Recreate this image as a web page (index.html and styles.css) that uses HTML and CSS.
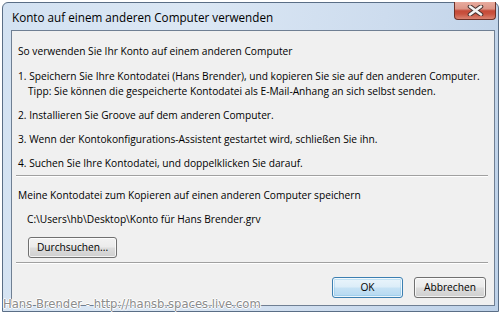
FILE: index.html
```html
<!DOCTYPE html>
<html lang="de">
<head>
<meta charset="utf-8">
<title>Konto auf einem anderen Computer verwenden</title>
<link rel="stylesheet" href="styles.css">
</head>
<body>
<div class="window">
  <div class="titlebar">
    <span class="title">Konto auf einem anderen Computer verwenden</span>
    <div class="close">
      <svg width="17" height="11" viewBox="0 0 17 11">
        <path d="M3 1.5 L14 9.5 M14 1.5 L3 9.5" stroke="#4a3431" stroke-width="4.6" stroke-linecap="round" fill="none"/>
        <path d="M3 1.5 L14 9.5 M14 1.5 L3 9.5" stroke="#f4f4f4" stroke-width="2.6" stroke-linecap="round" fill="none"/>
      </svg>
    </div>
  </div>
  <div class="client">
    <p class="line">So verwenden Sie Ihr Konto auf einem anderen Computer</p>
    <div class="step first">
      <p class="line">1. Speichern Sie Ihre Kontodatei (Hans Brender), und kopieren Sie sie auf den anderen Computer.</p>
      <p class="line tip">Tipp: Sie können die gespeicherte Kontodatei als E-Mail-Anhang an sich selbst senden.</p>
    </div>
    <p class="line step">2. Installieren Sie Groove auf dem anderen Computer.</p>
    <p class="line step">3. Wenn der Kontokonfigurations-Assistent gestartet wird, schließen Sie ihn.</p>
    <p class="line step">4. Suchen Sie Ihre Kontodatei, und doppelklicken Sie darauf.</p>
    <div class="sep sep-top"></div>
    <p class="line save">Meine Kontodatei zum Kopieren auf einen anderen Computer speichern</p>
    <p class="line path">C:\Users\hb\Desktop\Konto für Hans Brender.grv</p>
    <div class="browse-row"><button class="btn browse">Durchsuchen...</button></div>
    <div class="sep sep-bottom"></div>
    <div class="actions">
      <button class="btn ok">OK</button>
      <button class="btn cancel">Abbrechen</button>
    </div>
  </div>
</div>
<div class="watermark">Hans Brender - http://hansb.spaces.live.com</div>
</body>
</html>
```

FILE: styles.css
```css
html, body {
  margin: 0;
  padding: 0;
  background: #ffffff;
}

body {
  font-family: "Open Sans", "Noto Sans", sans-serif;
  font-size: 10.2px;
  color: #000;
  position: relative;
  width: 504px;
  height: 314px;
  overflow: hidden;
}

.window {
  margin: 2px 0 0 2px;
  width: 497px;
  height: 310px;
  box-sizing: border-box;
  border: 1px solid #5a6e86;
  border-radius: 6px 6px 0 0;
  background: linear-gradient(100deg, #d3e2f2 0%, #dbe7f4 35%, #cddcee 70%, #bdd1e8 100%);
  display: flex;
  flex-direction: column;
}

.titlebar {
  height: 27px;
  display: flex;
  justify-content: space-between;
  align-items: flex-start;
}

.title {
  padding-left: 9px;
  margin-top: 7px;
  line-height: 15px;
  font-size: 11.7px;
}

.close {
  width: 42px;
  height: 18px;
  margin-right: 2px;
  margin-top: -1px;
  box-sizing: border-box;
  border: 1px solid #6e3128;
  border-top: none;
  border-radius: 0 0 4px 4px;
  background: linear-gradient(#e8ab9e 0%, #dc9587 40%, #c54a38 52%, #c9523f 70%, #da8472 100%);
  display: flex;
  align-items: center;
  justify-content: center;
}

.close svg {
  display: block;
}

.client {
  margin-left: 8px;
  width: 484px;
  height: 276px;
  box-sizing: border-box;
  border: 1px solid #6f7f93;
  background: #f0f0f0;
  padding: 13px 7px 0 6px;
  display: flex;
  flex-direction: column;
}

.line {
  margin: 0;
  line-height: 15px;
  white-space: nowrap;
}

.step {
  margin-top: 9px;
}

.step.first {
  margin-top: 10px;
}

.tip {
  padding-left: 10px;
}

.sep {
  height: 1px;
  background: #a0a0a0;
  border-bottom: 1px solid #ffffff;
  margin-left: -2px;
  margin-right: -1px;
}

.sep-top {
  margin-top: 4px;
}

.save {
  margin-top: 11px;
}

.path {
  margin-top: 9px;
  padding-left: 9px;
}

.browse-row {
  margin-top: 10px;
  display: flex;
}

.btn {
  font-family: inherit;
  font-size: 10.2px;
  color: #000;
  height: 21px;
  padding: 0;
  box-sizing: border-box;
  border: 1px solid #707070;
  border-radius: 3px;
  background: linear-gradient(#f2f2f2 0%, #ebebeb 48%, #dddddd 52%, #cfcfcf 100%);
  box-shadow: inset 0 0 0 1px rgba(255,255,255,0.75);
  line-height: 17px;
}

.browse {
  margin-left: 10px;
  width: 89px;
}

.sep-bottom {
  margin-top: 4px;
}

.actions {
  margin-top: 13px;
  display: flex;
  justify-content: flex-end;
  gap: 11px;
  margin-right: 1px;
}

.ok {
  width: 71px;
  border-color: #3c7fb1;
  background: linear-gradient(#eaf5fc 0%, #dcedf8 48%, #c6e2f5 52%, #b4d8f0 100%);
  box-shadow: inset 0 0 0 1px rgba(255,255,255,0.8), inset 0 0 0 2px rgba(120,190,230,0.35);
}

.cancel {
  width: 72px;
}

.watermark {
  position: absolute;
  left: 3px;
  top: 297px;
  font-family: "DejaVu Sans", sans-serif;
  font-size: 11.6px;
  line-height: 14px;
  color: #8c8c8c;
  white-space: nowrap;
  text-shadow: 1px 0 0 #fff, -1px 0 0 #fff, 0 1px 0 #fff, 0 -1px 0 #fff;
}
```
